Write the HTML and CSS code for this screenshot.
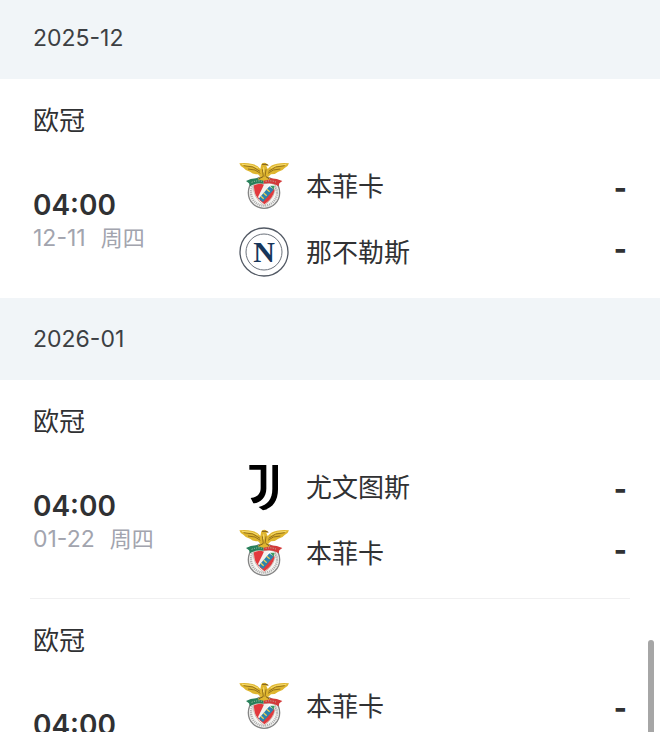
FILE: index.html
```
<!DOCTYPE html>
<html lang="zh-CN">
<head>
  <meta charset="UTF-8" />
  <meta name="viewport" content="width=device-width, initial-scale=1" />
  <title>赛程</title>
  <link rel="stylesheet" href="styles.css">
</head>
<body>

  <!-- club crests -->
  <svg class="sprite" aria-hidden="true">
    <symbol id="benfica" viewBox="27 18 150 150">
      <circle cx="102" cy="113" r="47" fill="#f4f4f2" stroke="#858585" stroke-width="4" />
      <circle cx="102" cy="113" r="39" fill="none" stroke="#a9a9a9" stroke-width="7" stroke-dasharray="3 3" />
      <path d="M70 89Q88 81 102 87Q118 80 136 89Q138 127 102 151Q68 128 70 89Z" fill="#fff" stroke="#b59a8e" stroke-width="2" />
      <path d="M72 91Q88 83 102 89L99 116L87 134Q70 115 72 91Z" fill="#e2383d" />
      <path d="M102 89L118 87L98 122L88 132L84 126Z" fill="#f3f1ef" />
      <path d="M110 111L124 99L134 104Q130 129 103 148L88 135Z" fill="#e03a3d" />
      <path d="M118 94L131 104L99 141L86 131Z" fill="#2d83ad" />
      <path d="M110 103L119 110M101 114L110 122M93 124L101 131" stroke="#e9cf55" stroke-width="4" />
      <path d="M120 92L134 92L131 104Z" fill="#3d9b66" />
      <path d="M48 78Q70 66 101 72L101 86Q76 82 60 94L57 85Z" fill="#28805a" />
      <path d="M101 72Q134 66 157 78L148 85L146 94Q128 82 101 86Z" fill="#d33a3a" />
      <path d="M65 82Q82 75 97 79M107 79Q126 75 139 82" fill="none" stroke="#b9cbb8" stroke-width="3" stroke-dasharray="3 4" />
      <path d="M28 25Q47 22 67 27Q83 31 91 42L94 28Q98 21 107 24L115 30L109 33L113 42Q123 29 141 26Q160 22 177 25Q175 34 164 39Q158 48 145 50Q137 58 123 58L114 66L121 73L101 77L83 73L91 65L84 58Q69 58 60 50Q47 48 41 39Q30 34 28 25Z" fill="#dfb62f" />
      <path d="M41 32L69 36L90 49M54 42L75 45L91 55M164 32L137 36L116 49M151 42L130 45L114 55M97 43L100 65M108 43L105 65" fill="none" stroke="#94721d" stroke-width="3" />
      <path d="M36 28L66 31L84 39M169 28L140 31L122 39M101 37V52" fill="none" stroke="#f6dc70" stroke-width="3" />
      <path d="M96 28H108L115 31M87 71L99 65M108 65L117 71" fill="none" stroke="#785a1d" stroke-width="3" />
    </symbol>
  </svg>

  <main class="schedule">
    <section class="month">
      <h2 class="month-title">2025-12</h2>
      <article class="match">
        <h3 class="league">欧冠</h3>
        <div class="match-body">
          <div class="kickoff">
            <time class="time">04:00</time>
            <p class="date"><span>12-11</span><span class="weekday">周四</span></p>
          </div>
          <ul class="teams">
            <li class="team"><svg class="crest"><use href="#benfica" /></svg><span class="name">本菲卡</span></li>
            <li class="team">
              <svg class="crest" viewBox="0 0 50 50">
                <circle cx="25" cy="25" r="24" fill="#fff" stroke="#525964" stroke-width="1.3" />
                <circle cx="25" cy="25" r="18" fill="none" stroke="#6b717b" />
                <text class="crest-letter" x="25" y="35" text-anchor="middle">N</text>
              </svg>
              <span class="name">那不勒斯</span>
            </li>
          </ul>
          <div class="scores"><span>-</span><span>-</span></div>
        </div>
      </article>
    </section>

    <section class="month">
      <h2 class="month-title">2026-01</h2>
      <article class="match">
        <h3 class="league">欧冠</h3>
        <div class="match-body">
          <div class="kickoff">
            <time class="time">04:00</time>
            <p class="date"><span>01-22</span><span class="weekday">周四</span></p>
          </div>
          <ul class="teams">
            <li class="team">
              <svg class="crest" viewBox="27 21 150 150">
                <path d="M58 30H109V101C109 128 90 144 70 145L62 129C80 127 92 118 92 99V44H58Z" />
                <path d="M127 30H144V103C144 139 126 161 99 166L86 156C113 149 127 132 127 101Z" />
              </svg>
              <span class="name">尤文图斯</span>
            </li>
            <li class="team"><svg class="crest"><use href="#benfica" /></svg><span class="name">本菲卡</span></li>
          </ul>
          <div class="scores"><span>-</span><span>-</span></div>
        </div>
      </article>
      <article class="match">
        <h3 class="league">欧冠</h3>
        <div class="match-body">
          <div class="kickoff">
            <time class="time">04:00</time>
          </div>
          <ul class="teams">
            <li class="team"><svg class="crest"><use href="#benfica" /></svg><span class="name">本菲卡</span></li>
          </ul>
          <div class="scores"><span>-</span></div>
        </div>
      </article>
    </section>
  </main>

  <div class="scroll-thumb"></div>

</body>
</html>
```
FILE: styles.css
```
* {
  box-sizing: border-box;
}
body {
  margin: 0;
  height: 100vh;
  overflow: hidden;
  background: #fff;
  color: #303133;
  font-family: Inter, "Noto Sans CJK SC", sans-serif;
}
h2, h3, p, ul {
  margin: 0;
  padding: 0;
  font-weight: 400;
}
.sprite {
  display: none;
}
.month-title {
  padding: 24px 33px;
  background: #f1f5f8;
  color: #3c3f43;
  font-size: 23px;
  line-height: 34px;
}
.month:first-child .month-title {
  padding-top: 21px;
}
.match {
  position: relative;
  padding: 24px 33px 13px;
}
.match + .match::before {
  content: "";
  position: absolute;
  top: -1px;
  left: 30px;
  right: 30px;
  height: 1px;
  background: #f0f0f1;
}
.league {
  margin-bottom: 14px;
  font-size: 26px;
  line-height: 36px;
}
.match-body {
  display: flex;
  height: 132px;
}
.kickoff {
  flex: 0 0 206px;
  padding-top: 34px;
}
.time {
  display: block;
  font-size: 28px;
  font-weight: 600;
  line-height: 36px;
}
.date {
  display: flex;
  gap: 15px;
  color: #a2a4ae;
  font-size: 23px;
  line-height: 30px;
}
.weekday {
  font-size: 22px;
}
.teams {
  flex: 1;
  list-style: none;
}
.team {
  display: flex;
  align-items: center;
  gap: 17px;
  height: 66px;
  font-size: 26px;
}
.name {
  padding-bottom: 4px;
}
.crest {
  width: 50px;
  height: 50px;
}
.crest-letter {
  fill: #17365a;
  font-family: "Liberation Serif", serif;
  font-size: 30px;
  font-weight: 700;
}
.scores {
  display: flex;
  flex-direction: column;
  padding-top: 5px;
  font-size: 28px;
  font-weight: 800;
  line-height: 61px;
}
.scroll-thumb {
  position: fixed;
  right: 6px;
  bottom: -8px;
  width: 6px;
  height: 100px;
  border-radius: 3px;
  background: #a6a6a6;
}
```
